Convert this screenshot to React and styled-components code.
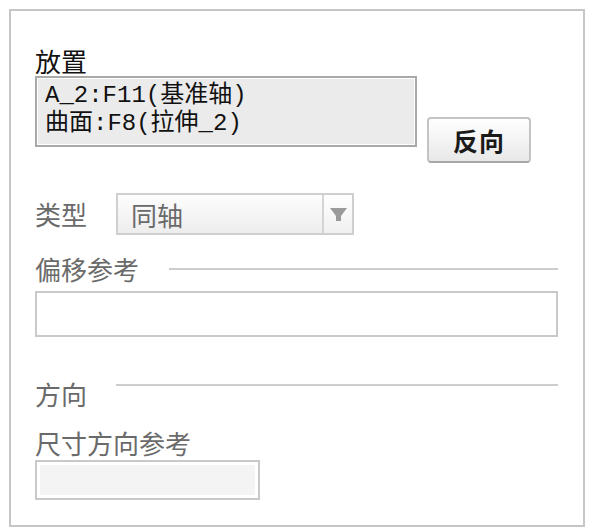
import styled, { createGlobalStyle } from 'styled-components';

const GlobalStyle = createGlobalStyle`
  html, body {
    margin: 0;
    padding: 0;
    background: #fff;
  }
  body {
    font-family: "Noto Sans CJK SC", "Liberation Sans", sans-serif;
  }
`;

const Panel = styled.section`
  box-sizing: border-box;
  margin: 9px 0 0 9px;
  width: 576px;
  height: 518px;
  border: 2px solid #c6c6c6;
  padding: 37px 25px 0 24px;
  display: flex;
  flex-direction: column;
`;

const Label = styled.div`
  font-size: 26px;
  line-height: 26px;
  color: ${({ $dark }) => ($dark ? '#111' : '#6a6a6a')};
  white-space: nowrap;
`;

const PlacementRow = styled.div`
  display: flex;
  align-items: flex-start;
  margin-top: 2px;
`;

const RefList = styled.div`
  box-sizing: border-box;
  width: 382px;
  height: 71px;
  border: 2px solid #a9a9a9;
  box-shadow: inset 0 0 0 1px #fff;
  background: #ebebeb;
  padding: 4px 8px 0;
  font-family: "Liberation Mono", "Noto Sans CJK SC", monospace;
  font-size: 24px;
  line-height: 28px;
  color: #111;
  white-space: nowrap;
`;

const FlipButton = styled.button`
  box-sizing: border-box;
  width: 104px;
  height: 46px;
  margin: 41px 0 0 10px;
  border: 2px solid #c4c4c4;
  border-bottom-color: #a8a8a8;
  border-radius: 4px;
  background: linear-gradient(#ffffff, #e8e8e8);
  font-family: "Noto Sans CJK SC", sans-serif;
  font-weight: 700;
  font-size: 25px;
  line-height: 1;
  color: #1a1a1a;
  padding: 0;
  letter-spacing: 1px;
`;

const TypeRow = styled.div`
  display: flex;
  align-items: center;
  gap: 29px;
  margin-top: 30px;
`;

const Select = styled.div`
  box-sizing: border-box;
  width: 238px;
  height: 42px;
  border: 2px solid #cfcfcf;
  display: flex;
  background: linear-gradient(#fdfdfd, #ededed);
`;

const SelectValue = styled.div`
  flex: 1;
  display: flex;
  align-items: center;
  padding-left: 13px;
  font-size: 26px;
  color: #6a6a6a;
  border-right: 2px solid #d4d4d4;
`;

const SelectArrow = styled.div`
  width: 28px;
  display: flex;
  align-items: center;
  justify-content: center;
  background: linear-gradient(#ffffff, #f0f0f0);
`;

const Heading = styled.div`
  display: flex;
  align-items: ${({ $top }) => ($top ? 'flex-start' : 'center')};
  gap: ${({ $gap }) => $gap}px;
  margin-top: ${({ $mt }) => $mt}px;
`;

const Rule = styled.div`
  flex: 1;
  height: 2px;
  background: #cdcdcd;
  margin-top: ${({ $top }) => ($top ? '3px' : '0')};
`;

const Field = styled.div`
  box-sizing: border-box;
  width: ${({ $w }) => $w};
  height: ${({ $h }) => $h}px;
  margin-top: ${({ $mt }) => $mt}px;
  border: 2px solid #c9c9c9;
  background: ${({ $fill }) => $fill || '#fff'};
  box-shadow: ${({ $fill }) => ($fill ? 'inset 0 0 0 3px #fff' : 'none')};
`;

const SubLabel = styled(Label)`
  margin-top: 23px;
`;

export default function App() {
  return (
    <>
      <GlobalStyle />
      <Panel>
        <Label $dark>放置</Label>
        <PlacementRow>
          <RefList>
            <div>A_2:F11(基准轴)</div>
            <div>曲面:F8(拉伸_2)</div>
          </RefList>
          <FlipButton>反向</FlipButton>
        </PlacementRow>

        <TypeRow>
          <Label>类型</Label>
          <Select>
            <SelectValue>同轴</SelectValue>
            <SelectArrow>
              <svg width="17" height="13" viewBox="0 0 17 13">
                <path d="M0 0H17L11 8V13H6V8Z" fill="#9a9a9a" />
              </svg>
            </SelectArrow>
          </Select>
        </TypeRow>

        <Heading $gap={30} $mt={21}>
          <Label>偏移参考</Label>
          <Rule />
        </Heading>
        <Field $w="100%" $h={46} $mt={9} />

        <Heading $gap={29} $mt={44} $top>
          <Label>方向</Label>
          <Rule $top />
        </Heading>
        <SubLabel>尺寸方向参考</SubLabel>
        <Field $w="225px" $h={40} $mt={4} $fill="#f4f4f4" />
      </Panel>
    </>
  );
}
